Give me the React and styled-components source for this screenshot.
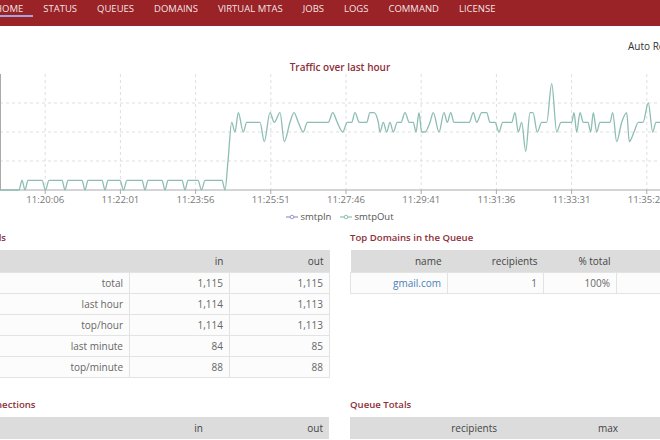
import React from "react";
import styled, { createGlobalStyle } from "styled-components";

const Global = createGlobalStyle`
  html, body { margin: 0; padding: 0; overflow: hidden; background: #fff; }
  body { font-family: "Open Sans", "Liberation Sans", sans-serif; }
`;

const Page = styled.div`
  margin-left: -22px;
  width: 780px;
`;

const Nav = styled.nav`
  height: 26px;
  box-sizing: border-box;
  background: #9a2328;
  display: flex;
  align-items: flex-start;
  padding: 3px 0 0 7px;
`;

const NavItem = styled.a`
  font-size: 9.5px;
  line-height: 12px;
  color: rgba(255, 255, 255, 0.9);
  text-transform: uppercase;
  text-decoration: none;
  padding: 0 10px;
  border-bottom: 2px solid ${(p) => (p.$active ? "#a3a6dd" : "transparent")};
  white-space: nowrap;
`;

const TopBar = styled.div`
  display: flex;
  padding: 13px 0 7px 650px;
  font-size: 10px;
  line-height: 14px;
  color: #333;
  white-space: nowrap;
`;

const ChartBox = styled.div`
  width: 724px;
  display: flex;
  flex-direction: column;
  align-items: center;
`;

const ChartTitle = styled.div`
  font-size: 10px;
  line-height: 14px;
  font-weight: 600;
  color: #8e2f3a;
`;

const Plot = styled.svg`
  display: block;
  width: 724px;
  height: 136px;
`;

const Legend = styled.div`
  display: flex;
  gap: 9px;
  font-size: 9.5px;
  line-height: 14px;
  color: #555;
`;

const LegendItem = styled.span`
  display: inline-flex;
  align-items: center;
  gap: 2px;
`;

const Sections = styled.div`
  display: grid;
  grid-template-columns: 351px 380px;
  column-gap: 21px;
  row-gap: 20px;
  margin-top: 7px;
`;

const Panel = styled.section`
  display: flex;
  flex-direction: column;
  gap: 5px;
`;

const Heading = styled.h3`
  margin: 0;
  font-size: 9.6px;
  line-height: 14px;
  font-weight: 600;
  color: #8e2f3a;
  white-space: nowrap;
`;

const Table = styled.table`
  border-collapse: collapse;
  table-layout: fixed;
  width: ${(p) => p.$w}px;
  font-size: 10px;
  color: #666;
`;

const Th = styled.th`
  height: 22px;
  padding: 0 6px;
  background: #dcdcdc;
  color: #444;
  font-weight: 400;
  text-align: right;
  white-space: nowrap;
`;

const Td = styled.td`
  height: 20px;
  padding: 0 6px;
  background: #fcfcfc;
  border: 1px solid #e3e3e3;
  text-align: right;
  white-space: nowrap;
`;

const Link = styled.a`
  color: #4a80b8;
  text-decoration: none;
`;

const NAV = ["Home", "Status", "Queues", "Domains", "Virtual MTAs", "Jobs", "Logs", "Command", "License"];

const OX = 22;
const BASE = 190;
const TOP = 74;
const UNIT = 9.667;
const Y = (v) => BASE - v * UNIT - TOP;

const low = [
  [0, 0], [19, 0], [22, 1], [25, 0], [28, 1], [42, 1], [45.5, 0], [49, 1], [62, 1], [65, 0], [68, 1],
  [82, 1], [85, 0], [88, 1], [102, 1], [105, 0], [108, 1], [120, 1], [123.5, 0], [127, 1], [142, 1],
  [145, 0], [148, 1], [162, 1], [165, 0], [168, 1], [182, 1], [185, 0], [188, 1], [198, 1], [201.5, 0],
  [205, 1], [222, 1], [225, 0],
];
const high = [
  [228, 3], [231.7, 7], [235, 6], [238.3, 8], [243.3, 6], [246.7, 7], [260, 7], [264.3, 5], [270, 8],
  [274.3, 7], [280, 8], [284.3, 5], [290, 7], [294, 8], [298.3, 7], [303.3, 6], [307.3, 7], [328.3, 7],
  [332.7, 8], [337.3, 7], [342.7, 6], [347.3, 7], [351.7, 7], [355, 8], [359.3, 7], [366.7, 7], [370, 8],
  [374, 8], [378.3, 7], [380, 6], [383.3, 7], [386.7, 6], [390, 7], [393.3, 6], [397.3, 7], [401, 7],
  [405, 8], [409.3, 7], [413.3, 7], [416, 6], [419, 8], [421.7, 6], [425, 6], [430, 7], [433.3, 8],
  [439, 6], [444, 8], [447.3, 7], [450.7, 8], [454, 7], [469.3, 7], [473.3, 8], [476.7, 7], [481.7, 8],
  [486.7, 8], [490, 7], [495, 7], [499, 6], [502.7, 7], [511.7, 7], [515, 8], [518.3, 6], [521.7, 7],
  [525.7, 4], [530, 8], [533, 8], [537.3, 6], [541.7, 7], [546.7, 7], [551.7, 11], [556.7, 6], [561, 7],
  [571.7, 7], [574, 8], [576.7, 6], [580, 8], [583.3, 7], [588, 7], [590.7, 6], [593.3, 8], [596.7, 6],
  [600, 7], [610, 7], [612.7, 8], [616.7, 5], [621.7, 7], [626.7, 8], [629.3, 5], [634, 6], [638.3, 7],
  [643, 7], [648.3, 9], [652.7, 6], [656, 7], [660, 7], [700, 7],
];
const DATA = [...low, ...high].map(([x, v]) => [x + OX, Y(v)]);

function monotone(pts) {
  const n = pts.length;
  const s = [];
  for (let i = 0; i < n - 1; i++) {
    s.push((pts[i + 1][1] - pts[i][1]) / (pts[i + 1][0] - pts[i][0]));
  }
  const t = new Array(n);
  t[0] = s[0];
  t[n - 1] = s[n - 2];
  for (let i = 1; i < n - 1; i++) {
    const h0 = pts[i][0] - pts[i - 1][0];
    const h1 = pts[i + 1][0] - pts[i][0];
    const s0 = s[i - 1];
    const s1 = s[i];
    const p = (s0 * h1 + s1 * h0) / (h0 + h1);
    t[i] = (Math.sign(s0) + Math.sign(s1)) * Math.min(Math.abs(s0), Math.abs(s1), 0.5 * Math.abs(p)) || 0;
  }
  let d = `M${pts[0][0]},${pts[0][1]}`;
  for (let i = 0; i < n - 1; i++) {
    const [x0, y0] = pts[i];
    const [x1, y1] = pts[i + 1];
    const h = (x1 - x0) / 3;
    d += ` C${x0 + h},${y0 + t[i] * h} ${x1 - h},${y1 - t[i + 1] * h} ${x1},${y1}`;
  }
  return d;
}

const TICKS = ["11:20:06", "11:22:01", "11:23:56", "11:25:51", "11:27:46", "11:29:41", "11:31:36", "11:33:31", "11:35:26"];

function Chart() {
  const bottom = BASE - TOP;
  return (
    <Plot viewBox="0 0 724 136">
      {[3, 6, 9].map((v) => (
        <line key={v} x1={OX} x2={724} y1={Y(v)} y2={Y(v)} stroke="#dedede" strokeDasharray="3,3" strokeWidth="1" />
      ))}
      {TICKS.map((t, i) => {
        const x = OX + 45.2 + i * 75.2;
        return (
          <g key={t}>
            <line x1={x} x2={x} y1={0} y2={bottom} stroke="#dedede" strokeDasharray="3,3" strokeWidth="1" />
            <line x1={x} x2={x} y1={bottom} y2={bottom + 4} stroke="#aaa" strokeWidth="1" />
            <text x={x} y={bottom + 13} textAnchor="middle" fontSize="9.6" fill="#777" fontFamily="Open Sans, sans-serif">
              {t}
            </text>
          </g>
        );
      })}
      <line x1={OX + 0.5} x2={OX + 0.5} y1={0} y2={bottom} stroke="#aaa" strokeWidth="1" />
      <line x1={OX} x2={724} y1={bottom} y2={bottom} stroke="#aaa" strokeWidth="1" />
      <path d={monotone(DATA)} fill="none" stroke="#8dbdb3" strokeWidth="1.3" strokeLinejoin="round" />
    </Plot>
  );
}

function Marker({ color }) {
  return (
    <svg width="12" height="6" viewBox="0 0 12 6">
      <line x1="0" x2="12" y1="3" y2="3" stroke={color} strokeWidth="1.2" />
      <circle cx="6" cy="3" r="1.8" fill="#fff" stroke={color} strokeWidth="1" />
    </svg>
  );
}

function DataTable({ cols, head, rows }) {
  const w = cols.reduce((a, b) => a + b, 0);
  return (
    <Table $w={w}>
      <colgroup>
        {cols.map((c, i) => (
          <col key={i} style={{ width: c }} />
        ))}
      </colgroup>
      <thead>
        <tr>
          {head.map((h, i) => (
            <Th key={i}>{h}</Th>
          ))}
        </tr>
      </thead>
      <tbody>
        {rows.map((r, i) => (
          <tr key={i}>
            {r.map((c, j) => (
              <Td key={j}>{c}</Td>
            ))}
          </tr>
        ))}
      </tbody>
    </Table>
  );
}

export default function App() {
  return (
    <Page>
      <Global />
      <Nav>
        {NAV.map((n, i) => (
          <NavItem key={n} $active={i === 0}>
            {n}
          </NavItem>
        ))}
      </Nav>
      <TopBar>Auto Refresh</TopBar>
      <ChartBox>
        <ChartTitle>Traffic over last hour</ChartTitle>
        <Chart />
        <Legend>
          <LegendItem>
            <Marker color="#9a96cf" />
            smtpIn
          </LegendItem>
          <LegendItem>
            <Marker color="#8dc3ab" />
            smtpOut
          </LegendItem>
        </Legend>
      </ChartBox>
      <Sections>
        <Panel>
          <Heading>Totals</Heading>
          <DataTable
            cols={[151, 100, 100]}
            head={["", "in", "out"]}
            rows={[
              ["total", "1,115", "1,115"],
              ["last hour", "1,114", "1,113"],
              ["top/hour", "1,114", "1,113"],
              ["last minute", "84", "85"],
              ["top/minute", "88", "88"],
            ]}
          />
        </Panel>
        <Panel>
          <Heading>Top Domains in the Queue</Heading>
          <DataTable
            cols={[97, 96, 73, 114]}
            head={["name", "recipients", "% total", ""]}
            rows={[[<Link key="l">gmail.com</Link>, "1", "100%", ""]]}
          />
        </Panel>
        <Panel>
          <Heading>Connections</Heading>
          <DataTable cols={[151, 80, 120]} head={["", "in", "out"]} rows={[]} />
        </Panel>
        <Panel>
          <Heading>Queue Totals</Heading>
          <DataTable cols={[70, 83, 121, 106]} head={["", "recipients", "max", ""]} rows={[]} />
        </Panel>
      </Sections>
    </Page>
  );
}
